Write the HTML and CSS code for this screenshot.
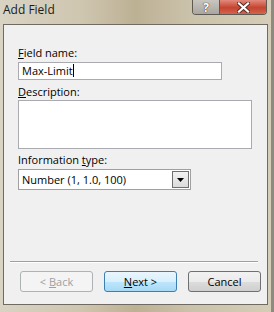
FILE: index.html
```html
<!DOCTYPE html>
<html lang="en">
<head>
    <meta charset="UTF-8">
    <title>Add Field</title>
    <link rel="stylesheet" href="styles.css">
</head>
<body>
    <div class="window">
        <div class="titlebar">
            <span class="title">Add Field</span>
            <div class="caption">
                <div class="cap-btn help">?</div>
                <div class="cap-btn close">
                    <svg width="13" height="11" viewBox="0 0 13 11">
                        <path d="M2 1.5 L11 9.5 M11 1.5 L2 9.5" stroke="#5a2a22" stroke-width="4" stroke-linecap="square"/>
                        <path d="M2 1.5 L11 9.5 M11 1.5 L2 9.5" stroke="#ffffff" stroke-width="2.2" stroke-linecap="square"/>
                    </svg>
                </div>
            </div>
        </div>
        <div class="client">
            <label class="lbl"><u>F</u>ield name:</label>
            <div class="textbox name">Max-Limit<span class="caret"></span></div>
            <label class="lbl"><u>D</u>escription:</label>
            <div class="textbox desc"></div>
            <label class="lbl">Information <u>t</u>ype:</label>
            <div class="combo">
                <span class="combo-text">Number (1, 1.0, 100)</span>
                <span class="combo-btn">
                    <svg width="7" height="4" viewBox="0 0 7 4"><path d="M0 0 H7 L3.5 4 Z" fill="#000"/></svg>
                </span>
            </div>
            <div class="spacer"></div>
            <div class="separator"></div>
            <div class="buttons">
                <button class="btn disabled">&lt; <u>B</u>ack</button>
                <button class="btn default"><u>N</u>ext &gt;</button>
                <button class="btn">Cancel</button>
            </div>
        </div>
    </div>
</body>
</html>
```

FILE: styles.css
```css
body {
    margin: 0;
    font-family: "Open Sans", "Noto Sans", sans-serif;
}

.window {
    width: 274px;
    height: 312px;
    display: flex;
    flex-direction: column;
    box-sizing: border-box;
    background: linear-gradient(90deg, #d9d3c4 0%, #cfc6b0 30%, #bdb194 50%, #cbc2ab 70%, #d6cdb8 100%);
    border-right: 3px solid #8f8a80;
}

.titlebar {
    height: 24px;
    display: flex;
    align-items: flex-start;
    padding-left: 3px;
}

.title {
    margin-top: 1px;
    font-size: 12px;
    color: #1b1b1b;
}

.caption {
    margin-left: auto;
    margin-right: 4px;
    display: flex;
    border: 1px solid #5e5a52;
    border-top: none;
    border-radius: 0 0 4px 4px;
    overflow: hidden;
}

.cap-btn {
    height: 14px;
    display: flex;
    justify-content: center;
    align-items: center;
}

.help {
    width: 26px;
    background: linear-gradient(#c9c6c0, #a9a69f);
    border-right: 1px solid #5e5a52;
    color: #fff;
    font-size: 12px;
    font-weight: bold;
    text-shadow: 0 0 1px #333, 0 0 1px #333;
}

.close {
    width: 46px;
    background: linear-gradient(#e28a7c, #c5442f 55%, #d4644e);
}

.client {
    flex: 1;
    margin: 0 3px 7px 3px;
    border: 1px solid #6f6b63;
    background: #f0f0f0;
    display: flex;
    flex-direction: column;
    padding: 20px 0 0 14px;
}

.lbl {
    font-size: 11px;
    line-height: 15px;
    color: #000;
}

.textbox {
    box-sizing: border-box;
    background: #fff;
    border: 1px solid #a9abb0;
    font-size: 11px;
    line-height: 16px;
    padding-left: 3px;
    color: #000;
}

.name {
    width: 204px;
    height: 18px;
    margin: 2px 0 4px;
}

.caret {
    display: inline-block;
    width: 1px;
    height: 13px;
    background: #000;
    vertical-align: -2px;
}

.desc {
    width: 234px;
    height: 49px;
    margin: 1px 0 3px;
}

.combo {
    box-sizing: border-box;
    width: 173px;
    height: 21px;
    margin-top: 2px;
    background: #fff;
    border: 1px solid #a0a0a0;
    display: flex;
    align-items: center;
    justify-content: space-between;
    padding: 0 1px 0 3px;
    font-size: 11px;
}

.combo-btn {
    box-sizing: border-box;
    width: 17px;
    height: 17px;
    border: 1px solid #707070;
    background: linear-gradient(#f2f2f2, #dcdcdc);
    display: flex;
    justify-content: center;
    align-items: center;
}

.spacer {
    flex: 1;
}

.separator {
    height: 1px;
    margin: 0 9px 0 -8px;
    background: #a0a0a0;
    border-bottom: 1px solid #fff;
}

.buttons {
    display: flex;
    gap: 11px;
    padding: 8px 0 12px 2px;
}

.btn {
    box-sizing: border-box;
    width: 73px;
    height: 21px;
    padding: 0;
    font-family: inherit;
    font-size: 11px;
    color: #000;
    border: 1px solid #707070;
    border-radius: 3px;
    background: linear-gradient(#f2f2f2 0%, #ebebeb 50%, #dddddd 51%, #cfcfcf 100%);
}

.btn.default {
    border-color: #3c7fb1;
    background: linear-gradient(#eaf6fd 0%, #d9f0fc 50%, #bee6fd 51%, #a7d9f5 100%);
}

.btn.disabled {
    color: #a0a0a0;
    border-color: #adb2b5;
    background: #f4f4f4;
}
```
